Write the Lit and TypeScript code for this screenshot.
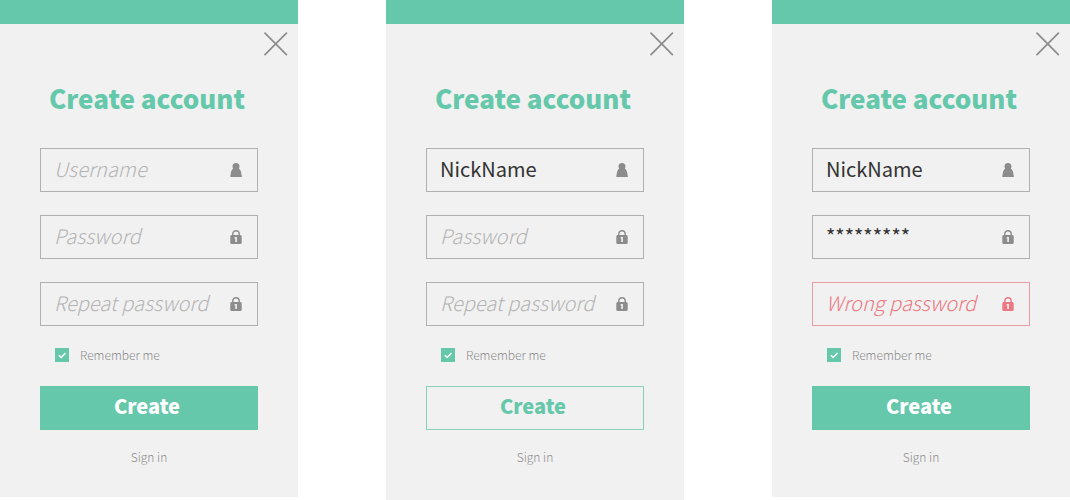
import { LitElement, html, css, svg, nothing } from "lit";
import { customElement, property } from "lit/decorators.js";
import { classMap } from "lit/directives/class-map.js";

type IconName = "user" | "lock";

interface Field {
  id: string;
  label: string;
  icon: IconName;
  type: "text" | "password";
  value?: string;
  error?: boolean;
}

interface Screen {
  id: string;
  fields: Field[];
  outlined?: boolean;
}

const username = (value = ""): Field => ({ id: "username", label: "Username", icon: "user", type: "text", value });
const password: Field = { id: "password", label: "Password", icon: "lock", type: "password" };
const repeat: Field = { id: "repeat", label: "Repeat password", icon: "lock", type: "password" };

const screens: Screen[] = [
  { id: "empty", fields: [username(), password, repeat] },
  { id: "named", fields: [username("NickName"), password, repeat], outlined: true },
  {
    id: "wrong",
    fields: [
      username("NickName"),
      { ...password, type: "text", value: "*********" },
      { ...repeat, label: "Wrong password", error: true },
    ],
  },
];

const icons = {
  user: svg`<path d="M6 0C8.300 0 9.500 1.300 9.500 3.200C9.500 4.100 9.200 4.900 8.900 5.500C10.400 6.700 11.200 8.500 11.300 10.500C11.400 11.500 11.900 12.500 11.900 14H0.300C0.300 12.500 0.700 11.500 0.800 10.500C0.900 8.500 1.700 6.700 3.100 5.500C2.800 4.900 2.500 4.100 2.500 3.200C2.500 1.300 3.700 0 6 0Z" fill="currentColor"/>`,
  lock: svg`<path d="M2.800 6V3.800C2.800 1.900 4.200 0.700 6 0.700S9.200 1.900 9.200 3.800V6" fill="none" stroke="currentColor" stroke-width="1.400"/>
    <path fill-rule="evenodd" fill="currentColor" d="M1.500 5H10.500Q11.700 5 11.700 6.500V12.500Q11.700 14 10.500 14H1.500Q0.300 14 0.300 12.500V6.500Q0.300 5 1.500 5ZM4.700 6.900V8.500H5.300V12H6.900V6.900Z"/>`,
};

@customElement("account-form")
export class AccountForm extends LitElement {
  @property({ attribute: false }) screen!: Screen;

  static styles = css`
    :host {
      display: block;
      background: #f1f1f1;
      border-top: 24px solid #65c8ab;
      color: #8c8c8c;
    }
    .bar {
      display: flex;
      justify-content: flex-end;
      padding: 8px 10px 0;
    }
    .close {
      display: block;
      padding: 0;
      border: 0;
      background: none;
      color: #8c8c8c;
      line-height: 0;
      cursor: pointer;
    }
    .form {
      display: flex;
      flex-direction: column;
      padding: 22px 40px 29px;
    }
    .title {
      margin: 0 0 30px;
      padding-right: 4px;
      font-size: 26px;
      line-height: 40px;
      font-weight: 900;
      text-align: center;
      white-space: nowrap;
      color: #65c8ab;
    }
    .fields {
      display: grid;
      grid-template-columns: minmax(0, 1fr);
      gap: 23px;
    }
    .field {
      display: flex;
      align-items: center;
      box-sizing: border-box;
      height: 44px;
      padding: 0 15px 0 13px;
      border: 1px solid #b0b0b0;
    }
    .input {
      flex: 1;
      min-width: 0;
      width: 100%;
      height: 42px;
      box-sizing: border-box;
      padding: 0 0 4px;
      border: 0;
      outline: 0;
      background: none;
      font: inherit;
      font-size: 20px;
      color: #333;
    }
    .input::placeholder {
      color: #b4b4b4;
      font-style: italic;
      font-weight: 300;
      opacity: 1;
    }
    .error {
      border-color: #ee9ba3;
      color: #ec7882;
    }
    .error .input::placeholder {
      color: #ec7882;
    }
    .icon {
      flex: none;
      display: block;
    }
    .remember {
      display: flex;
      align-items: center;
      gap: 11px;
      margin: 19px 15px 21px;
      height: 20px;
      font-size: 12px;
      line-height: 20px;
      font-weight: 300;
    }
    .box {
      display: grid;
    }
    .check,
    .tick {
      grid-area: 1 / 1;
      width: 14px;
      height: 14px;
      margin: 0;
    }
    .check {
      appearance: none;
      background: #65c8ab;
    }
    .tick {
      visibility: hidden;
      pointer-events: none;
    }
    .check:checked + .tick {
      visibility: visible;
    }
    .create {
      height: 44px;
      padding: 0 4px 6px 0;
      border: 1px solid #65c8ab;
      background: #65c8ab;
      color: #fff;
      font: inherit;
      font-size: 20px;
      font-weight: 900;
      cursor: pointer;
    }
    .outlined {
      border-color: #84d2bb;
      background: none;
      color: #65c8ab;
    }
    .signin {
      align-self: center;
      margin-top: 17px;
      padding-bottom: 1px;
      font-size: 12px;
      line-height: 20px;
      font-weight: 300;
      color: inherit;
      text-decoration: none;
    }
  `;

  private renderField(field: Field) {
    return html`
      <div class=${classMap({ field: true, error: !!field.error })}>
        <input
          class="input"
          id=${field.id}
          type=${field.type}
          placeholder=${field.label}
          aria-label=${field.label}
          aria-invalid=${field.error ? "true" : nothing}
          .value=${field.value ?? ""}
        />
        <svg class="icon" width="12" height="14" viewBox="0 0 12 14" aria-hidden="true">${icons[field.icon]}</svg>
      </div>
    `;
  }

  render() {
    const { fields, outlined } = this.screen;
    return html`
      <div class="bar">
        <button class="close" type="button" aria-label="Close">
          <svg width="24" height="24" viewBox="0 0 24 24" aria-hidden="true">
            <path d="M1 1.200L22.400 22.600M22.400 1.200L1 22.600" fill="none" stroke="currentColor" stroke-width="1.700" stroke-linecap="round" />
          </svg>
        </button>
      </div>
      <form class="form" @submit=${(e: Event) => e.preventDefault()}>
        <h2 class="title">Create account</h2>
        <div class="fields">${fields.map((f) => this.renderField(f))}</div>
        <label class="remember">
          <span class="box">
            <input class="check" type="checkbox" checked />
            <svg class="tick" viewBox="0 0 14 14" aria-hidden="true">
              <path d="M3.800 7.200L6.200 9.500L10.500 5" fill="none" stroke="#fff" stroke-width="1.500" />
            </svg>
          </span>
          Remember me
        </label>
        <button class=${classMap({ create: true, outlined: !!outlined })} type="submit">Create</button>
        <a class="signin" href="#signin">Sign in</a>
      </form>
    `;
  }
}

@customElement("app-root")
export class AppRoot extends LitElement {
  static styles = css`
    :host {
      display: block;
      min-height: 100vh;
      background: #fff;
      font-family: "Noto Sans CJK SC", "Noto Sans", sans-serif;
    }
    .screens {
      display: grid;
      grid-template-columns: repeat(3, minmax(0, 1fr));
      gap: 88px;
      align-items: start;
    }
    .full {
      box-sizing: border-box;
      min-height: 100vh;
    }
  `;

  render() {
    return html`
      <main class="screens">
        ${screens.map(
          (s) => html`<account-form class=${classMap({ full: !!s.outlined })} .screen=${s}></account-form>`
        )}
      </main>
    `;
  }
}
